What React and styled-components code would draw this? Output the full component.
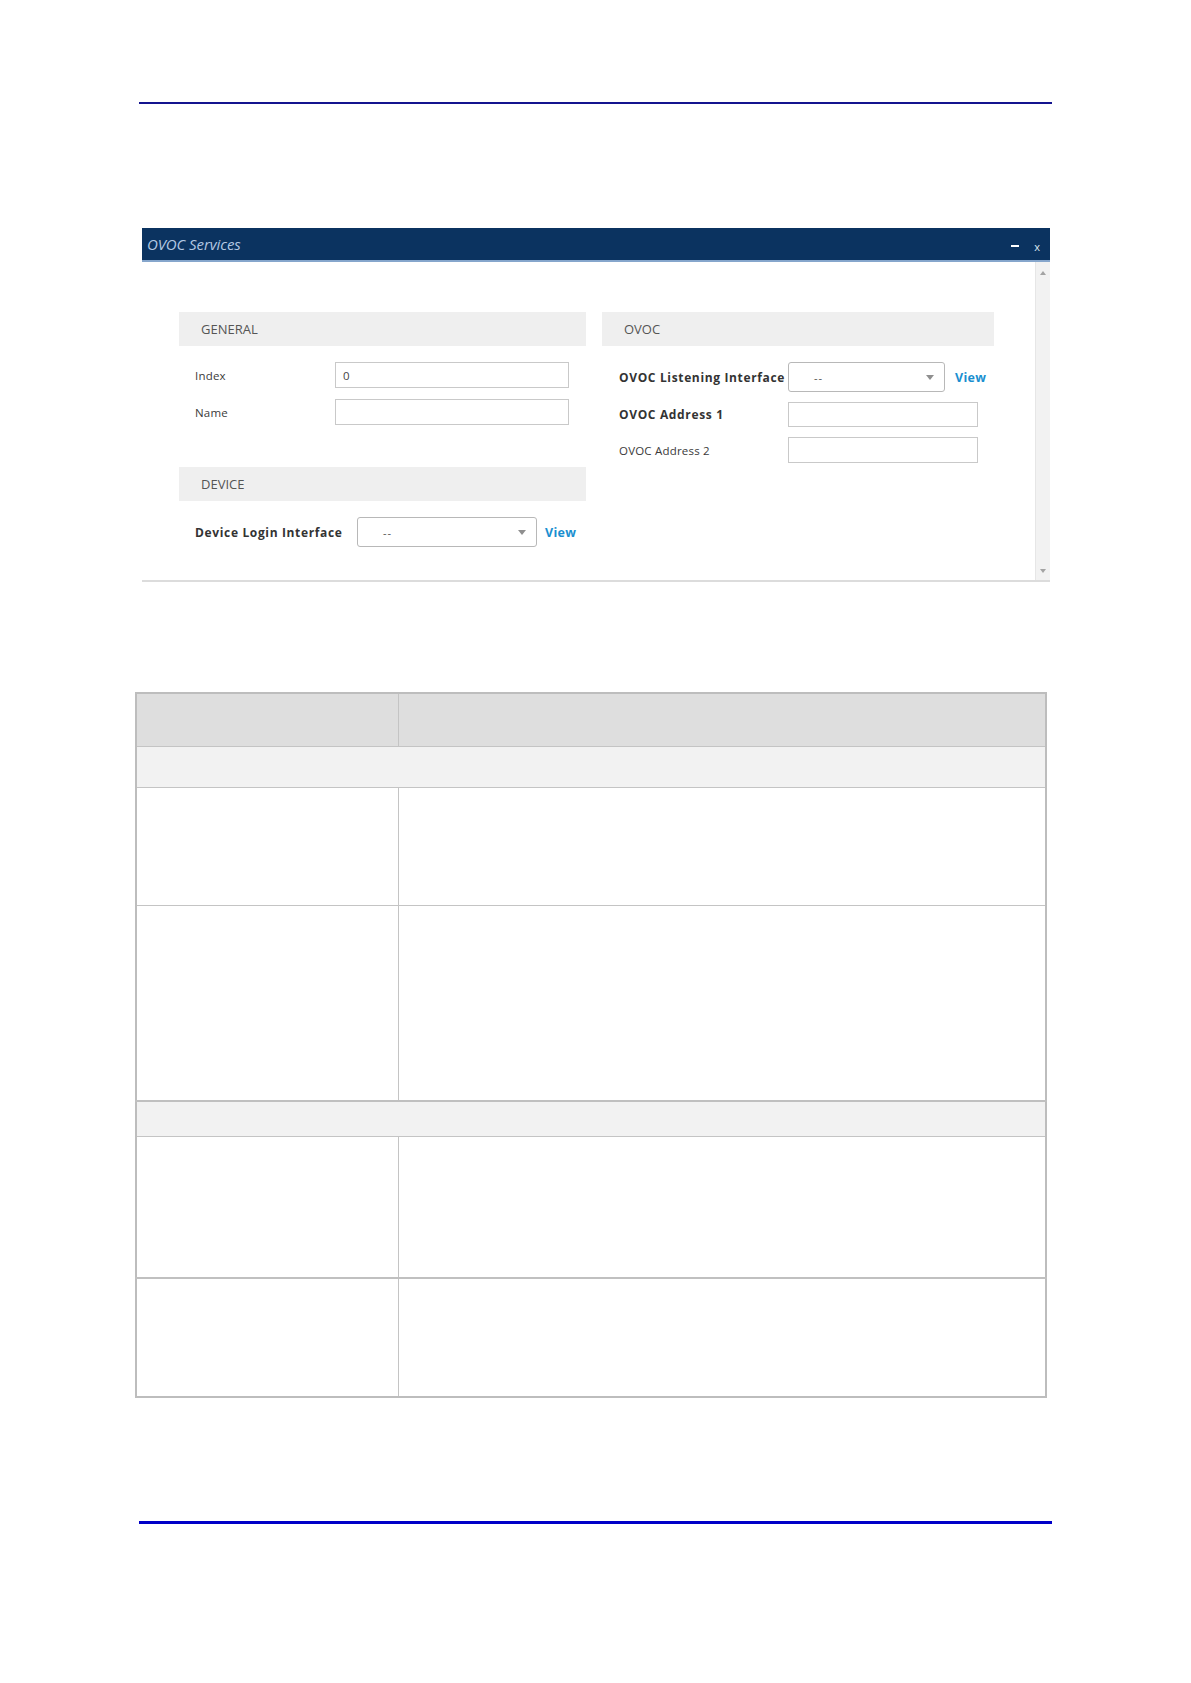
import styled, { createGlobalStyle } from "styled-components";

const GlobalStyle = createGlobalStyle`
  html, body {
    margin: 0;
    padding: 0;
    background: #fff;
  }
  body {
    font-family: "Open Sans", "Liberation Sans", sans-serif;
  }
`;

const Page = styled.div`
  width: 1191px;
  height: 1683px;
  box-sizing: border-box;
  padding-top: 102px;
  display: flex;
  flex-direction: column;
`;

const Rule = styled.div`
  margin-left: 139px;
  margin-top: ${(p) => p.$top || 0}px;
  width: 913px;
  height: ${(p) => p.$thick}px;
  background: ${(p) => p.$color};
`;

const Dialog = styled.div`
  margin: 124px 0 0 142px;
  width: 908px;
  display: flex;
  flex-direction: column;
`;

const TitleBar = styled.div`
  height: 32px;
  background: #0b3360;
  border-bottom: 2px solid #86a6cc;
  display: flex;
  align-items: center;
  padding: 0 10px 0 5px;
`;

const Title = styled.span`
  flex: 1;
  font-style: italic;
  font-size: 15px;
  color: #b3c8e2;
  letter-spacing: -0.1px;
`;

const WinButtons = styled.div`
  display: flex;
  align-items: center;
  gap: 15px;
  margin-top: 4px;
`;

const Minimize = styled.span`
  width: 8px;
  height: 2px;
  background: #fff;
`;

const Close = styled.span`
  font-size: 11px;
  color: #dfe8f3;
  line-height: 1;
`;

const Body = styled.div`
  height: 318px;
  display: flex;
  border-bottom: 2px solid #dcdcdc;
`;

const Content = styled.div`
  flex: 1;
  padding: 50px 0 0 37px;
  display: flex;
  gap: 16px;
  align-items: flex-start;
`;

const Column = styled.div`
  width: ${(p) => p.$width}px;
  display: flex;
  flex-direction: column;
`;

const SectionBar = styled.div`
  height: 34px;
  background: #efefef;
  display: flex;
  align-items: center;
  padding-left: 22px;
  font-size: 13px;
  color: #555;
  margin-top: ${(p) => p.$top || 0}px;
`;

const Fields = styled.div`
  display: flex;
  flex-direction: column;
  gap: ${(p) => p.$gap}px;
  padding: 16px 0 0 ${(p) => p.$indent}px;
`;

const FieldRow = styled.div`
  display: flex;
  align-items: center;
`;

const Label = styled.span`
  width: ${(p) => p.$width}px;
  flex-shrink: 0;
  font-size: ${(p) => (p.$bold ? "12px" : "11.5px")};
  font-weight: ${(p) => (p.$bold ? 700 : 400)};
  letter-spacing: ${(p) => (p.$bold ? "0.65px" : "0.2px")};
  color: ${(p) => (p.$bold ? "#333" : "#3a3a3a")};
  white-space: nowrap;
`;

const TextBox = styled.div`
  width: ${(p) => p.$width}px;
  height: ${(p) => p.$height || 26}px;
  box-sizing: border-box;
  border: 1px solid #c9c9c9;
  background: #fff;
  padding-left: 7px;
  display: flex;
  align-items: center;
  font-size: 11.5px;
  color: #444;
`;

const Select = styled.div`
  width: ${(p) => p.$width}px;
  height: 30px;
  box-sizing: border-box;
  border: 1px solid #b8b8b8;
  border-radius: 3px;
  background: #fff;
  display: flex;
  align-items: center;
  padding: 0 10px 0 25px;
  font-size: 11px;
  color: #555;
`;

const SelectValue = styled.span`
  flex: 1;
  letter-spacing: 1px;
`;

const Caret = styled.span`
  width: 0;
  height: 0;
  border-left: 4px solid transparent;
  border-right: 4px solid transparent;
  border-top: 5px solid #8f8f8f;
`;

const ViewLink = styled.span`
  margin-left: ${(p) => p.$gap}px;
  font-size: 12.5px;
  font-weight: 700;
  color: #1a8fd0;
  letter-spacing: 0.3px;
`;

const Scrollbar = styled.div`
  width: 15px;
  background: #f2f2f2;
  border-left: 1px solid #e6e6e6;
  display: flex;
  flex-direction: column;
  justify-content: space-between;
  align-items: center;
  padding: 9px 0 7px;
  box-sizing: border-box;
`;

const Arrow = styled.span`
  width: 0;
  height: 0;
  border-left: 3.5px solid transparent;
  border-right: 3.5px solid transparent;
  ${(p) =>
    p.$up
      ? "border-bottom: 4px solid #a3a3a3;"
      : "border-top: 4px solid #a3a3a3;"}
`;

const Table = styled.table`
  margin: 110px 0 0 135px;
  width: 912px;
  border-collapse: collapse;
  border: 2px solid #bdbdbd;
  table-layout: fixed;
`;

const Cell = styled.td`
  padding: 0;
  height: ${(p) => p.$height}px;
  background: ${(p) => p.$bg || "#fff"};
  border-left: 1px solid #c4c4c4;
  border-right: 1px solid #c4c4c4;
  border-top: ${(p) => (p.$thickTop ? 2 : 1)}px solid #c0c0c0;
  border-bottom: 1px solid #c4c4c4;
`;

const rows = [
  { type: "head", height: 52 },
  { type: "group", height: 40 },
  { type: "row", height: 117 },
  { type: "row", height: 194 },
  { type: "group", height: 34, thickTop: true },
  { type: "row", height: 140 },
  { type: "row", height: 117, thickTop: true },
];

function DropDown({ width }) {
  return (
    <Select $width={width}>
      <SelectValue>--</SelectValue>
      <Caret />
    </Select>
  );
}

export default function App() {
  return (
    <>
      <GlobalStyle />
      <Page>
        <Rule $thick={2} $color="#14148f" />

        <Dialog>
          <TitleBar>
            <Title>OVOC Services</Title>
            <WinButtons>
              <Minimize />
              <Close>x</Close>
            </WinButtons>
          </TitleBar>
          <Body>
            <Content>
              <Column $width={407}>
                <SectionBar>GENERAL</SectionBar>
                <Fields $gap={11} $indent={16}>
                  <FieldRow>
                    <Label $width={140}>Index</Label>
                    <TextBox $width={234}>0</TextBox>
                  </FieldRow>
                  <FieldRow>
                    <Label $width={140}>Name</Label>
                    <TextBox $width={234} />
                  </FieldRow>
                </Fields>

                <SectionBar $top={42}>DEVICE</SectionBar>
                <Fields $gap={0} $indent={16}>
                  <FieldRow>
                    <Label $width={162} $bold>
                      Device Login Interface
                    </Label>
                    <DropDown width={180} />
                    <ViewLink $gap={8}>View</ViewLink>
                  </FieldRow>
                </Fields>
              </Column>

              <Column $width={392}>
                <SectionBar>OVOC</SectionBar>
                <Fields $gap={10} $indent={17}>
                  <FieldRow>
                    <Label $width={169} $bold>
                      OVOC Listening Interface
                    </Label>
                    <DropDown width={157} />
                    <ViewLink $gap={10}>View</ViewLink>
                  </FieldRow>
                  <FieldRow>
                    <Label $width={169} $bold>
                      OVOC Address 1
                    </Label>
                    <TextBox $width={190} $height={25} />
                  </FieldRow>
                  <FieldRow>
                    <Label $width={169}>OVOC Address 2</Label>
                    <TextBox $width={190} />
                  </FieldRow>
                </Fields>
              </Column>
            </Content>
            <Scrollbar>
              <Arrow $up />
              <Arrow />
            </Scrollbar>
          </Body>
        </Dialog>

        <Table>
          <colgroup>
            <col style={{ width: 262 }} />
            <col />
          </colgroup>
          <tbody>
            {rows.map((r, i) =>
              r.type === "group" ? (
                <tr key={i}>
                  <Cell colSpan={2} $height={r.height} $bg="#f2f2f2" $thickTop={r.thickTop} />
                </tr>
              ) : (
                <tr key={i}>
                  <Cell
                    $height={r.height}
                    $bg={r.type === "head" ? "#dedede" : "#fff"}
                    $thickTop={r.thickTop}
                  />
                  <Cell
                    $height={r.height}
                    $bg={r.type === "head" ? "#dedede" : "#fff"}
                    $thickTop={r.thickTop}
                  />
                </tr>
              )
            )}
          </tbody>
        </Table>

        <Rule $top={123} $thick={3} $color="#0000c8" />
      </Page>
    </>
  );
}
